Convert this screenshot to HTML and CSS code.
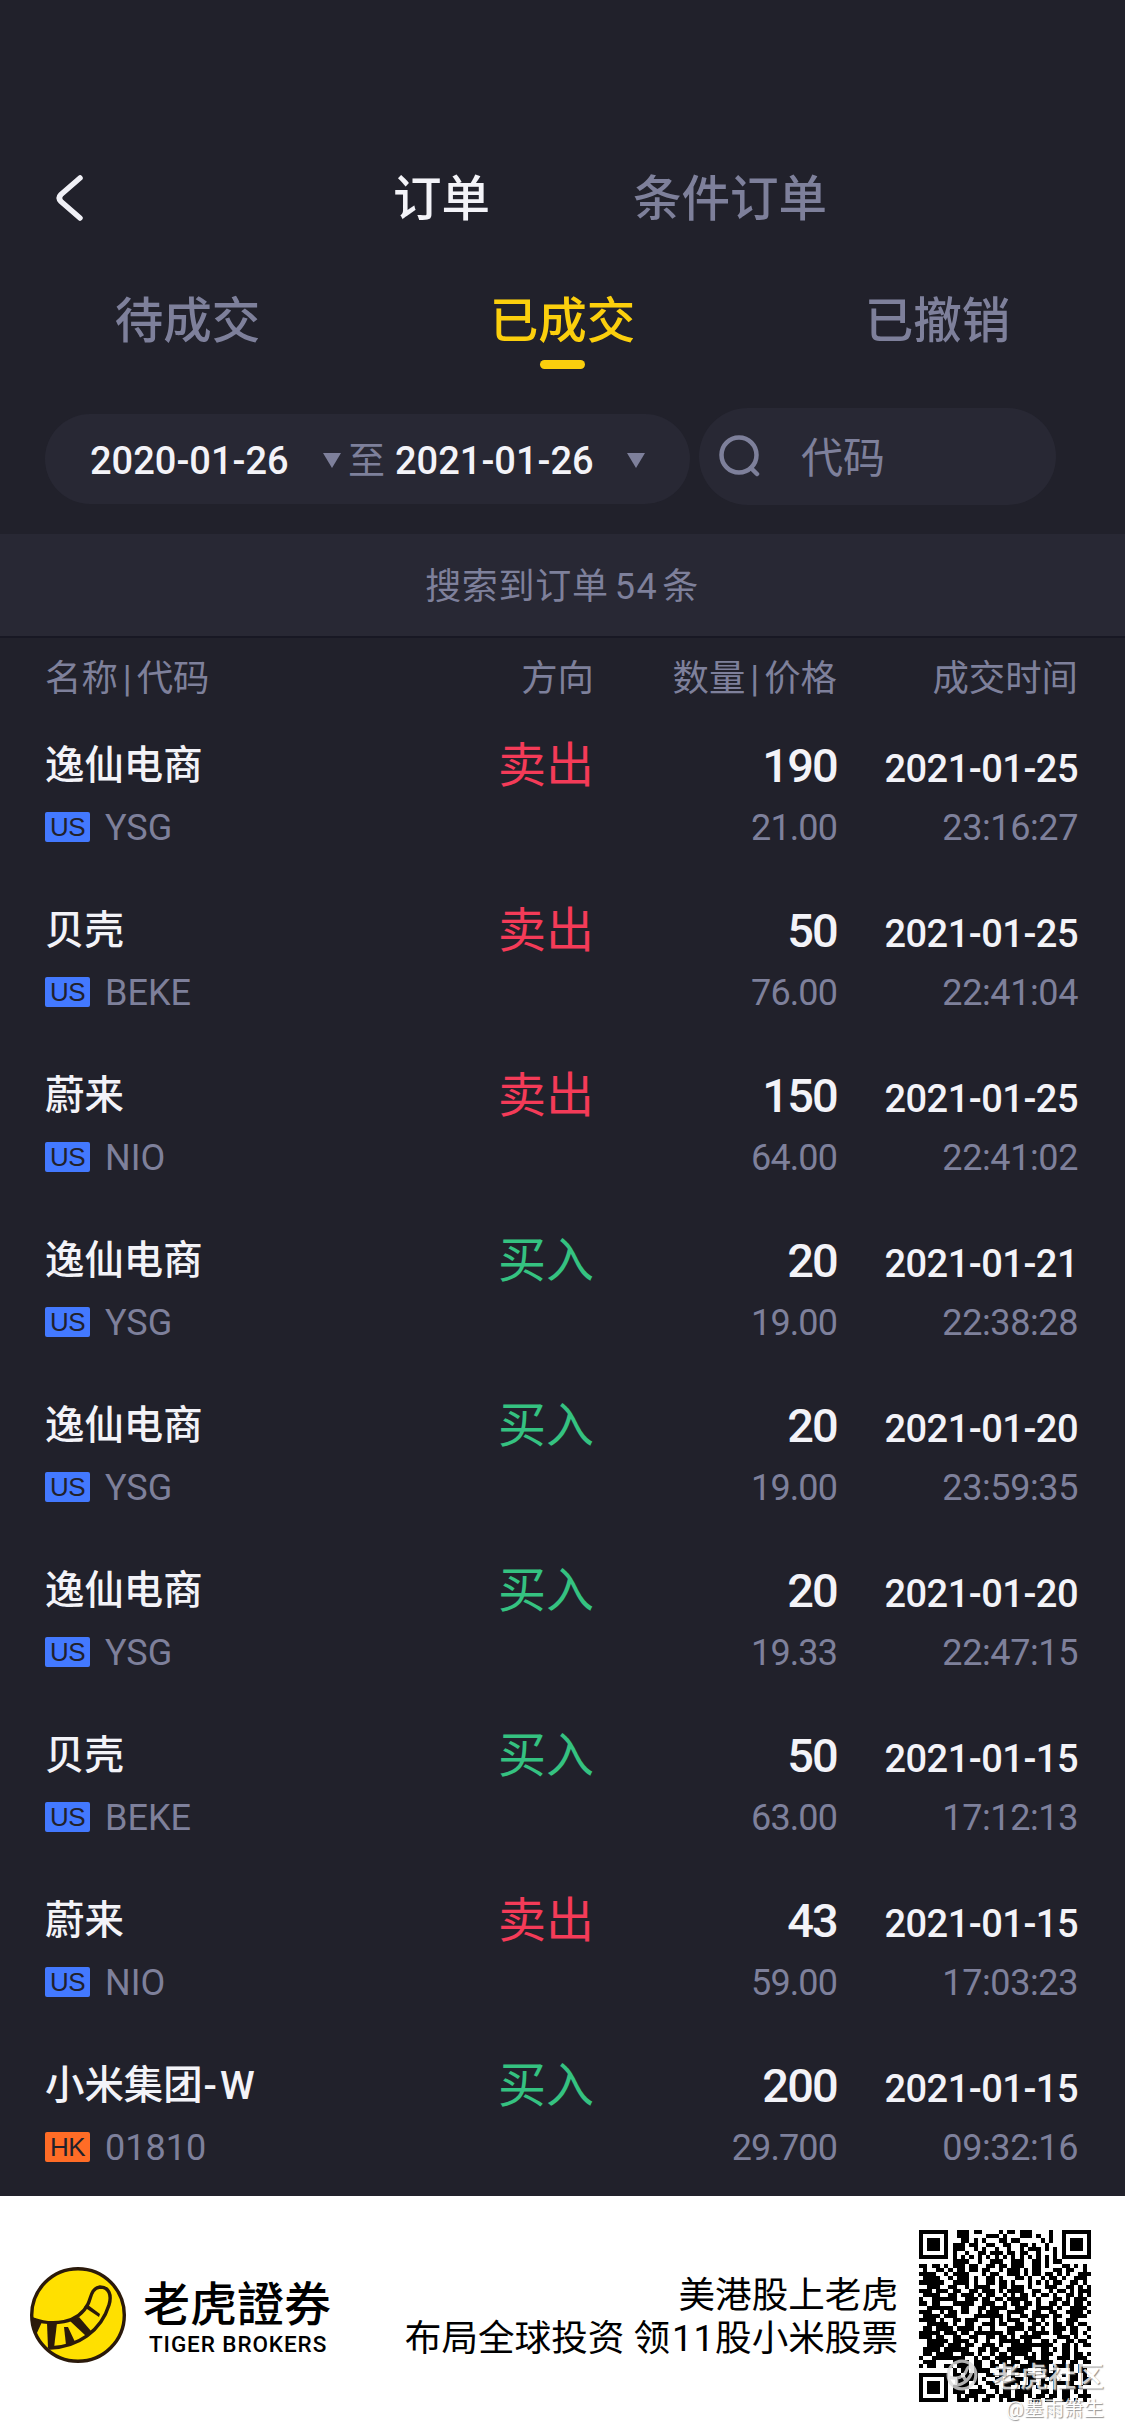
FILE: index.html
```html
<!DOCTYPE html>
<html lang="zh-CN">
  <head>
    <meta charset="utf-8">
    <meta name="viewport" content="width=device-width,initial-scale=1">
    <title>订单</title>
    <link rel="stylesheet" href="styles.css">
  </head>

  <body>
    <header class="topbar">
      <svg class="back" viewBox="0 0 30 48"><path d="M26 4L7 20.500Q3.500 24 7 27.500L26 44"/></svg>
      <span class="title active">订单</span>
      <span class="title">条件订单</span>
    </header>

    <nav class="tabs">
      <span class="tab">待成交</span>
      <span class="tab selected">已成交</span>
      <span class="tab">已撤销</span>
    </nav>

    <div class="filters">
      <div class="dates">
        <span class="date">2020-01-26</span>
        <i class="arrow"></i>
        <span class="to">至</span>
        <span class="date">2021-01-26</span>
        <i class="arrow last"></i>
      </div>
      <div class="search">
        <svg class="glass" viewBox="0 0 42 42"><circle cx="20" cy="20" r="17.500"/><path d="M32 33L38 39"/></svg>
        <span>代码</span>
      </div>
    </div>

    <div class="found">搜索到订单<b>54</b>条</div>

    <div class="grid head">
      <span>名称<i>|</i>代码</span><span>方向</span><span>数量<i>|</i>价格</span><span>成交时间</span>
    </div>

    <main>
      <div class="grid order">
        <span class="name">逸仙电商</span><span class="side sell">卖出</span><span class="qty">190</span><span class="day">2021-01-25</span>
        <span class="code"><em class="us">US</em>YSG</span><span></span><span class="price">21.00</span><span class="time">23:16:27</span>
      </div>
      <div class="grid order">
        <span class="name">贝壳</span><span class="side sell">卖出</span><span class="qty">50</span><span class="day">2021-01-25</span>
        <span class="code"><em class="us">US</em>BEKE</span><span></span><span class="price">76.00</span><span class="time">22:41:04</span>
      </div>
      <div class="grid order">
        <span class="name">蔚来</span><span class="side sell">卖出</span><span class="qty">150</span><span class="day">2021-01-25</span>
        <span class="code"><em class="us">US</em>NIO</span><span></span><span class="price">64.00</span><span class="time">22:41:02</span>
      </div>
      <div class="grid order">
        <span class="name">逸仙电商</span><span class="side buy">买入</span><span class="qty">20</span><span class="day">2021-01-21</span>
        <span class="code"><em class="us">US</em>YSG</span><span></span><span class="price">19.00</span><span class="time">22:38:28</span>
      </div>
      <div class="grid order">
        <span class="name">逸仙电商</span><span class="side buy">买入</span><span class="qty">20</span><span class="day">2021-01-20</span>
        <span class="code"><em class="us">US</em>YSG</span><span></span><span class="price">19.00</span><span class="time">23:59:35</span>
      </div>
      <div class="grid order">
        <span class="name">逸仙电商</span><span class="side buy">买入</span><span class="qty">20</span><span class="day">2021-01-20</span>
        <span class="code"><em class="us">US</em>YSG</span><span></span><span class="price">19.33</span><span class="time">22:47:15</span>
      </div>
      <div class="grid order">
        <span class="name">贝壳</span><span class="side buy">买入</span><span class="qty">50</span><span class="day">2021-01-15</span>
        <span class="code"><em class="us">US</em>BEKE</span><span></span><span class="price">63.00</span><span class="time">17:12:13</span>
      </div>
      <div class="grid order">
        <span class="name">蔚来</span><span class="side sell">卖出</span><span class="qty">43</span><span class="day">2021-01-15</span>
        <span class="code"><em class="us">US</em>NIO</span><span></span><span class="price">59.00</span><span class="time">17:03:23</span>
      </div>
      <div class="grid order">
        <span class="name">小米集团<i>-W</i></span><span class="side buy">买入</span><span class="qty">200</span><span class="day">2021-01-15</span>
        <span class="code"><em class="hk">HK</em>01810</span><span></span><span class="price">29.700</span><span class="time">09:32:16</span>
      </div>
    </main>

    <footer class="banner">
      <svg class="logo" viewBox="0 0 96 96">
        <circle cx="48" cy="48" r="46.300" fill="#ffe000" stroke="#2b1a0b" stroke-width="3.400"/>
        <g fill="none" stroke="#2b1a0b" stroke-width="3.400" stroke-linecap="round">
          <path d="M3 52C22 59 48 57 58 37C61 31 61 21 70 20C79 20 82 28 79 38C71 64 48 80 20 81"/>
        </g>
        <g fill="#2b1a0b">
          <path d="M2 50L12 55L6 68Z"/>
          <path d="M17 56L27 56L24 81L18 81Z"/>
          <path d="M34 60L38 60L45 75L36 78Z"/>
          <path d="M40 54L49 50L61 64L56 69Z"/>
          <path d="M54 40L58 38L70 47L69 50Z"/>
        </g>
      </svg>
      <div class="brand">
        <span class="brand-cn">老虎證券</span>
        <span class="brand-en">TIGER BROKERS</span>
      </div>
      <div class="slogan">
        <span>美港股上老虎</span>
        <span>布局全球投资 领<i>11</i>股小米股票</span>
      </div>
      <svg class="qr" id="qr" viewBox="0 0 41 41" shape-rendering="crispEdges"></svg>
      <div class="watermark">
        <div class="mark-site">
          <svg viewBox="0 0 30 30"><circle cx="15" cy="15" r="13"/><path d="M3 17C14 20 18 15 20 9C22 5 26 8 24 13C21 21 14 25 7 25M10 18V24M16 16L19 21"/></svg>
          <span>老虎社区</span>
        </div>
        <span class="mark-user">@墨雨箫生</span>
      </div>
    </footer>

    <script>
      // one string per row, # is a dark module
      const rows = [
        "#######..###.##....#.##.###....#..#######",
        "#.....#..###....###.#...###.#..#..#.....#",
        "#.###.#...##.#.#...##.##.....#.#..#.###.#",
        "#.###.#.###.##..##..##..##.#..#...#.###.#",
        "#.###.#.###..#.#..#..#..#.###.#.#.#.###.#",
        "#.....#.#..#..##.###.##.##..#...#.#.....#",
        "#######.#.#.#.#.#.#.#.#.#.#.#.#.#.#######",
        "........####..#..###..###..##.#.##.......",
        "##.##.#.###.##..##.##.###..##.#...##.#.#.",
        ".#..##.#.##.##.##..#.###.#.##...##.##..#.",
        "####..#.####...#.##..###.#.##.##.#.#..###",
        ".####..#.###.#..##.#...##.#..#.##.#..###.",
        "######..####.#..##.##.#...#.#.#.##..##.#.",
        "..###..##..#.####..##.###.#...###..##.#.#",
        "###.###.##..##.###.#.####..##..#.##.#.###",
        ".####..##.###.#.##..#.#.##.#.##.#..##.#.#",
        "#..######..###.##.##.#####..#...##.#.###.",
        "##.##...#####..###..#.##.##.#..##.##.##.#",
        "..######..##..##.####..###..####.#..####.",
        "###..#.##.##..#.###..####..##..##..####.#",
        ".####.###....#######.#..##.####.##..####.",
        "####.#..##.###...#.#.###..##.#..#..###...",
        "..#####.#..##..###.##..##..##.#.##.##.##.",
        ".##.####.####.#..#...####.##.#..###.##..#",
        "#####.###.##.#######.##..#.####.##..##.#.",
        "###.##..##..##..##.##.#.#####....###.#..#",
        "..#####.####.#..#..#####.##..##.#..##.##.",
        "..####.###.##..###.#..##########..##.#.##",
        ".####.######..##.##..######..##.#.##.#...",
        ".##.####..###.#..#.##.####.#.###..##.##.#",
        "#..########..#.##.#####..###.##..###.###.",
        ".###....####.##..#.##.##..######..#.##.##",
        "#.##..##.###.##..##.###.#######.#####.#..",
        "........#.##.####..##.####...##.#...#.##.",
        "#######.##.###..##.##.#..###..###.#.##.#.",
        "#.....#..#####.#..##..###.##.#.##...##.##",
        "#.###.#..###.#..##..####..##.##.#####..##",
        "#.###.#.####..#..##.##..###.##..#..####..",
        "#.###.#.###.####..#.##.####..##.#.##.#.#.",
        "#.....#..#.###..##.###.##.#.##.##.##..###",
        "#######..###.#.##..#.####..##.##..##.#.#."
      ];

      let path = "";
      rows.forEach((row, y) => {
        for (let x = 0; x < row.length; x++) {
          if (row[x] === "#")
            path += "M" + x + " " + y + "h1v1h-1z";
        }
      });
      document.getElementById("qr").innerHTML = '<path d="' + path + '"/>';
    </script>
  </body>
</html>
```
FILE: styles.css
```css
* {
    box-sizing: border-box;
}
body {
    margin: 0;
    width: 1125px;
    height: 2436px;
    overflow: hidden;
    background: #21212b;
    color: #7e809b;
    font-family: Roboto, 'Noto Sans CJK SC', sans-serif;
    font-size: 36px;
}
i, em {
    font-style: normal;
}

.topbar {
    display: flex;
    align-items: center;
    height: 258px;
    padding: 138px 0 0 53px;
}
.back {
    width: 32px;
    height: 48px;
    margin-right: 308px;
    fill: none;
    stroke: #f0f0f6;
    stroke-width: 5.5;
    stroke-linecap: round;
}
.title {
    margin: 0 143px 6px 0;
    font-size: 48.5px;
    font-weight: 500;
    white-space: nowrap;
}
.active {
    color: #f3f3f8;
}

.tabs {
    display: grid;
    grid-template-columns: repeat(3, 375px);
    height: 156px;
}
.tab {
    display: flex;
    flex-direction: column;
    align-items: center;
    padding-top: 29px;
    line-height: 70px;
    font-size: 48.5px;
    font-weight: 500;
}
.selected {
    color: #fbcf0d;
}
.selected::after {
    content: "";
    width: 45px;
    height: 9px;
    margin-top: 3px;
    border-radius: 5px;
    background: #fbcf0d;
}

.filters {
    display: flex;
    align-items: center;
    gap: 9px;
    height: 120px;
    padding: 0 45px 36px;
}
.dates {
    display: flex;
    align-items: center;
    width: 645px;
    height: 90px;
    margin-top: 6px;
    padding: 2px 0 0 45px;
    border-radius: 45px;
    background: #282834;
}
.date {
    width: 198px;
    padding-top: 1px;
    color: #f3f3f8;
    font-size: 38px;
    font-weight: 500;
    white-space: nowrap;
}
.arrow {
    margin-left: 35px;
    border: 9px solid transparent;
    border-top: 15px solid #7e809b;
    border-bottom: 0;
}
.last {
    margin-left: 34px;
}
.to {
    width: 37px;
    margin: 0 10px 5px 7px;
    font-size: 37px;
}
.search {
    display: flex;
    align-items: center;
    width: 357px;
    height: 97px;
    padding-left: 20px;
    border-radius: 49px;
    background: #282834;
    font-size: 42px;
}
.search span {
    margin-bottom: 3px;
}
.glass {
    width: 42px;
    height: 42px;
    margin-right: 40px;
    fill: none;
    stroke: #7e809b;
    stroke-width: 4.5;
    stroke-linecap: round;
}

.found {
    height: 104px;
    padding-right: 1px;
    border-bottom: 2px solid #181824;
    background: #282834;
    line-height: 106px;
    text-align: center;
    letter-spacing: 0.7px;
}
.found b {
    margin: 0 4px 0 6px;
    font-weight: 400;
    letter-spacing: 1.5px;
}

.grid {
    display: grid;
    grid-template-columns: 300px 249px 243px 241px;
    padding-left: 45px;
    text-align: right;
}
.grid > :first-child {
    text-align: left;
}
.head {
    height: 73px;
    font-size: 36.4px;
    line-height: 82px;
}
.head i {
    padding: 0 5px;
}

.order {
    height: 165px;
    grid-template-rows: 60px 50px;
    row-gap: 7px;
    padding-top: 25px;
    color: #7e809b;
    line-height: 60px;
    white-space: nowrap;
}
.name {
    color: #f3f3f8;
    font-size: 39.4px;
    font-weight: 500;
}
.name i {
    padding-left: 1px;
    letter-spacing: 3px;
}
.side {
    font-size: 48px;
}
.sell {
    color: #f43b58;
}
.buy {
    color: #35c281;
}
.qty {
    color: #f3f3f8;
    font-size: 47px;
    font-weight: 500;
    letter-spacing: -1.8px;
}
.day {
    padding-top: 3px;
    color: #f3f3f8;
    font-size: 38px;
    font-weight: 500;
    letter-spacing: -0.5px;
}
.code, .price, .time {
    line-height: 51px;
    letter-spacing: -0.9px;
}
.time {
    letter-spacing: -0.4px;
}
.code {
    display: flex;
    align-items: center;
    letter-spacing: 0;
}
.code em {
    width: 45px;
    height: 30px;
    margin: 0 15px 2px 0;
    border-radius: 2px;
    color: #21212b;
    font: 26px/31px 'Liberation Sans', sans-serif;
    letter-spacing: -0.5px;
    text-align: center;
}
.us {
    background: #4379ff;
}
.hk {
    background: #ff6c26;
}

.banner {
    position: relative;
    display: flex;
    height: 240px;
    padding-left: 30px;
    background: #fff;
    color: #000;
}
.logo {
    width: 96px;
    height: 96px;
    margin-top: 71px;
}
.brand {
    display: flex;
    flex-direction: column;
    width: 188px;
    margin: 81px 0 0 17px;
    white-space: nowrap;
}
.brand-cn {
    font-size: 47px;
    font-weight: 500;
    line-height: 56px;
}
.brand-en {
    padding-left: 6px;
    font-size: 22.5px;
    font-weight: 500;
    line-height: 22px;
    letter-spacing: 0.9px;
}
.slogan {
    display: flex;
    flex-direction: column;
    width: 567px;
    margin-top: 78px;
    font-size: 36.6px;
    line-height: 43px;
    text-align: right;
    white-space: nowrap;
}
.slogan i {
    padding-left: 2px;
    letter-spacing: 1px;
}
.qr {
    width: 172px;
    height: 172px;
    margin: 34px 0 0 21px;
}

.watermark {
    position: absolute;
    right: 21px;
    bottom: 12px;
    display: flex;
    flex-direction: column;
    align-items: flex-end;
    color: #fff;
    opacity: 0.8;
    text-shadow: 1px 1px 1px #777;
    white-space: nowrap;
}
.mark-site {
    display: flex;
    align-items: center;
    gap: 14px;
    height: 38px;
    font-size: 28px;
    font-weight: 500;
}
.mark-site svg {
    width: 32px;
    height: 32px;
    fill: none;
    stroke: #ddd;
    stroke-width: 3;
}
.mark-user {
    font-size: 20px;
    line-height: 30px;
}
```
